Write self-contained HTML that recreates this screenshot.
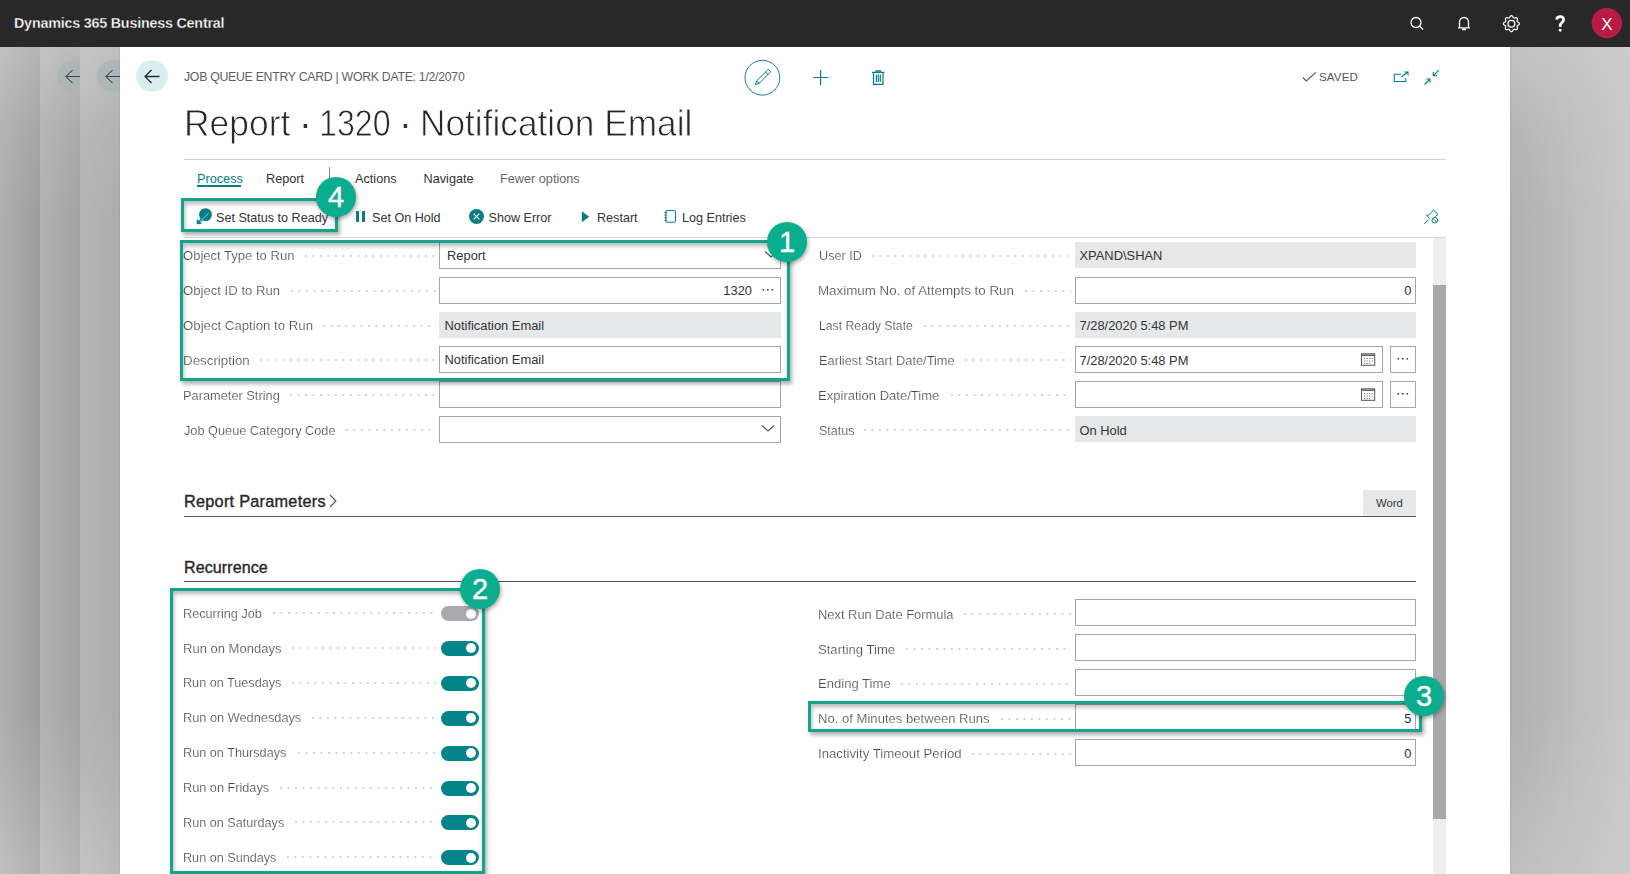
<!DOCTYPE html><html><head><meta charset="utf-8"><style>
*{box-sizing:border-box;margin:0;padding:0}
html,body{width:1630px;height:874px;overflow:hidden;background:#fff;font-family:"Liberation Sans",sans-serif;}
.a{position:absolute}
.t{position:absolute;white-space:nowrap;line-height:1}
#top{left:0;top:0;width:1630px;height:47px;background:#282828}
.pnl{top:47px;height:827px;width:40px}
#card{left:120px;top:47px;width:1390px;height:827px;background:#fff}
.lbl{position:absolute;white-space:nowrap;line-height:1;font-size:12.9px;color:#4a4a4a;-webkit-text-stroke:0.2px #fff}
.dots{position:absolute;height:2px;background-image:radial-gradient(circle at 1px 1px,#d4d4d4 0.75px,transparent 1px);background-size:7.5px 2px;background-repeat:repeat-x}
.fld{position:absolute;border:1px solid #a6a6a6;background:#fff;height:27px}
.ro{position:absolute;background:#e5e7e8;height:26px}
.val{position:absolute;white-space:nowrap;line-height:1;font-size:12.9px;color:#333}
.tab{position:absolute;white-space:nowrap;line-height:1;font-size:12.7px;color:#333;margin-top:1px}
.act{position:absolute;white-space:nowrap;line-height:1;font-size:12.6px;color:#333;margin-top:0.7px}
.hline{position:absolute;height:1px}
.box{position:absolute;border:3px solid #12a58a;box-shadow:2px 3px 4px rgba(0,0,0,.32), inset 1px 3px 4px rgba(0,0,0,.28)}
.badge{position:absolute;width:40px;height:40px;border-radius:50%;background:#0aad8e;box-shadow:1px 2px 4px rgba(0,0,0,.35);color:#fff;font-size:29px;line-height:41px;text-align:center;-webkit-text-stroke:0.4px #fff}
.tg{position:absolute;width:38px;height:15px;border-radius:8px;background:#02848a}
.tg::after{content:"";position:absolute;right:3.5px;top:2.5px;width:10px;height:10px;border-radius:50%;background:#fff}
.tg.off{background:#a9a9b1}
</style></head><body>
<div id="top" class="a"></div>
<div class="t" style="left:14px;top:16px;font-size:14.3px;font-weight:bold;color:#fff;letter-spacing:-0.2px;-webkit-text-stroke:0.3px #282828">Dynamics 365 Business Central</div>
<svg class="a" style="left:1400px;top:8px" width="230" height="32" viewBox="1400 8 230 32">
<g fill="none" stroke="#fff" stroke-width="1.3">
<circle cx="1416" cy="22.5" r="5"/><line x1="1419.6" y1="26.1" x2="1423" y2="29.5"/>
<path d="M1459.5 27.5 V22 a4.5 4.5 0 0 1 9 0 V27.5 M1458 27.8 H1470 M1462 29.5 h4"/>
<circle cx="1511.4" cy="23.7" r="3.4"/>
</g>
<path fill="none" stroke="#fff" stroke-width="1.2" d="M1511.40 15.65 L1511.92 15.79 L1512.39 16.19 L1512.79 16.74 L1513.11 17.30 L1513.42 17.76 L1513.75 18.02 L1514.18 18.07 L1514.71 17.96 L1515.34 17.80 L1516.01 17.69 L1516.62 17.74 L1517.09 18.01 L1517.36 18.48 L1517.41 19.09 L1517.30 19.76 L1517.14 20.39 L1517.03 20.92 L1517.08 21.35 L1517.34 21.68 L1517.80 21.99 L1518.36 22.31 L1518.91 22.71 L1519.31 23.18 L1519.45 23.70 L1519.31 24.22 L1518.91 24.69 L1518.36 25.09 L1517.80 25.41 L1517.34 25.72 L1517.08 26.05 L1517.03 26.48 L1517.14 27.01 L1517.30 27.64 L1517.41 28.31 L1517.36 28.92 L1517.09 29.39 L1516.62 29.66 L1516.01 29.71 L1515.34 29.60 L1514.71 29.44 L1514.18 29.33 L1513.75 29.38 L1513.42 29.64 L1513.11 30.10 L1512.79 30.66 L1512.39 31.21 L1511.92 31.61 L1511.40 31.75 L1510.88 31.61 L1510.41 31.21 L1510.01 30.66 L1509.69 30.10 L1509.38 29.64 L1509.05 29.38 L1508.62 29.33 L1508.09 29.44 L1507.46 29.60 L1506.79 29.71 L1506.18 29.66 L1505.71 29.39 L1505.44 28.92 L1505.39 28.31 L1505.50 27.64 L1505.66 27.01 L1505.77 26.48 L1505.72 26.05 L1505.46 25.72 L1505.00 25.41 L1504.44 25.09 L1503.89 24.69 L1503.49 24.22 L1503.35 23.70 L1503.49 23.18 L1503.89 22.71 L1504.44 22.31 L1505.00 21.99 L1505.46 21.68 L1505.72 21.35 L1505.77 20.92 L1505.66 20.39 L1505.50 19.76 L1505.39 19.09 L1505.44 18.48 L1505.71 18.01 L1506.18 17.74 L1506.79 17.69 L1507.46 17.80 L1508.09 17.96 L1508.62 18.07 L1509.05 18.02 L1509.38 17.76 L1509.69 17.30 L1510.01 16.74 L1510.41 16.19 L1510.88 15.79Z"/>
<path fill="none" stroke="#fff" stroke-width="2.7" d="M1556.6 19.6 C1557 17 1559 16.6 1560.2 16.6 C1562.6 16.6 1563.6 18.2 1563.6 19.8 C1563.6 22.4 1560.2 22.8 1560.2 25.6 V27"/><circle cx="1560.2" cy="30.3" r="1.45" fill="#fff"/>
<circle cx="1606.8" cy="23" r="15.2" fill="#bb1a45"/>
<text x="1606.8" y="29.5" fill="#fff" font-family="Liberation Sans" font-size="17" text-anchor="middle">X</text>
</svg>
<div class="a" style="left:0px;top:47px;width:40px;height:827px;background:linear-gradient(to bottom,rgb(193,193,193) 0%,rgb(180,180,180) 10.0%,rgb(176,176,176) 20.9%,rgb(176,176,176) 80.1%,rgb(179,179,179) 86.7%,rgb(193,193,193) 100%)"><div class="a" style="left:0;top:0;width:40px;height:827px;background:linear-gradient(to bottom,rgb(180,180,180) 0%,rgb(166,166,166) 10.0%,rgb(156,156,156) 20.9%,rgb(156,156,156) 80.1%,rgb(164,164,164) 86.7%,rgb(177,177,177) 100%);-webkit-mask-image:linear-gradient(to right,transparent,#000)"></div></div>
<div class="a" style="left:40px;top:47px;width:40px;height:827px;background:linear-gradient(to bottom,rgb(196,196,196) 0%,rgb(183,183,183) 10.0%,rgb(179,179,179) 20.9%,rgb(179,179,179) 80.1%,rgb(182,182,182) 86.7%,rgb(195,195,195) 100%)"><div class="a" style="left:0;top:0;width:40px;height:827px;background:linear-gradient(to bottom,rgb(186,186,186) 0%,rgb(170,170,170) 10.0%,rgb(162,162,162) 20.9%,rgb(162,162,162) 80.1%,rgb(168,168,168) 86.7%,rgb(180,180,180) 100%);-webkit-mask-image:linear-gradient(to right,transparent,#000)"></div></div>
<div class="a" style="left:80px;top:47px;width:40px;height:827px;background:linear-gradient(to bottom,rgb(199,199,199) 0%,rgb(186,186,186) 10.0%,rgb(181,181,181) 20.9%,rgb(181,181,181) 80.1%,rgb(184,184,184) 86.7%,rgb(197,197,197) 100%)"><div class="a" style="left:0;top:0;width:40px;height:827px;background:linear-gradient(to bottom,rgb(190,190,190) 0%,rgb(178,178,178) 10.0%,rgb(172,172,172) 20.9%,rgb(172,172,172) 80.1%,rgb(176,176,176) 86.7%,rgb(185,185,185) 100%);-webkit-mask-image:linear-gradient(to right,transparent,#000)"></div></div>
<svg class="a" style="left:56.5px;top:60px" width="23.5" height="32" viewBox="56.5 60 23.5 32">
<circle cx="72.5" cy="76" r="16" fill="#a9b6b6" opacity=".75"/>
<path fill="none" stroke="#3c4444" stroke-width="1.05" d="M65.5 76.5 H80.5 M72.0 70 L65.5 76.5 L72.0 83"/>
</svg>
<svg class="a" style="left:96.5px;top:60px" width="23.5" height="32" viewBox="96.5 60 23.5 32">
<circle cx="112.5" cy="76" r="16" fill="#a9b6b6" opacity=".75"/>
<path fill="none" stroke="#3c4444" stroke-width="1.05" d="M105.5 76.5 H120.5 M112.0 70 L105.5 76.5 L112.0 83"/>
</svg>
<div class="a" style="left:1510px;top:47px;width:120px;height:827px;background:linear-gradient(to bottom,rgb(194,194,194) 0%,rgb(182,182,182) 10.0%,rgb(176,176,176) 20.9%,rgb(176,176,176) 80.1%,rgb(180,180,180) 86.7%,rgb(191,191,191) 100%)"><div class="a" style="left:0;top:0;width:120px;height:827px;background:linear-gradient(to bottom,rgb(204,204,204) 0%,rgb(202,202,202) 10.0%,rgb(201,201,201) 20.9%,rgb(201,201,201) 80.1%,rgb(202,202,202) 86.7%,rgb(204,204,204) 100%);-webkit-mask-image:linear-gradient(to right,transparent,#000)"></div></div>
<div class="a" style="left:1510px;top:47px;width:2px;height:827px;background:linear-gradient(to right,rgba(0,0,0,.06),rgba(0,0,0,0))"></div>
<div class="a" style="left:118px;top:47px;width:2px;height:827px;background:linear-gradient(to right,rgba(0,0,0,0),rgba(0,0,0,.06))"></div>
<div id="card" class="a"></div>
<svg class="a" style="left:136px;top:60px" width="32" height="32" viewBox="136 60 32 32">
<circle cx="152" cy="76" r="16" fill="#d9eff2"/>
<path fill="none" stroke="#2a2a2a" stroke-width="1.3" d="M145 76.5 H159.5 M151.5 70 L145 76.5 L151.5 83"/>
</svg>
<div class="t" style="left:184px;top:71px;font-size:12.3px;color:#5a5f66;letter-spacing:-0.28px;">JOB QUEUE ENTRY CARD | WORK DATE: 1/2/2070</div>
<div class="t" style="left:184.3px;top:106px;font-size:36.5px;color:#262626;-webkit-text-stroke:0.8px #fff;transform:scaleX(0.97);transform-origin:0 0">Report</div>
<div class="t" style="left:299.2px;top:106px;font-size:36.5px;color:#262626;-webkit-text-stroke:0.2px #fff;transform:scaleX(1);transform-origin:0 0">·</div>
<div class="t" style="left:318.5px;top:106px;font-size:36.5px;color:#262626;-webkit-text-stroke:0.8px #fff;transform:scaleX(0.881);transform-origin:0 0">1320</div>
<div class="t" style="left:399.2px;top:106px;font-size:36.5px;color:#262626;-webkit-text-stroke:0.2px #fff;transform:scaleX(1);transform-origin:0 0">·</div>
<div class="t" style="left:419.5px;top:106px;font-size:36.5px;color:#262626;-webkit-text-stroke:0.8px #fff;transform:scaleX(0.966);transform-origin:0 0">Notification Email</div>
<svg class="a" style="left:740px;top:56px" width="160" height="44" viewBox="740 56 160 44">
<circle cx="762.4" cy="77.7" r="17.4" fill="none" stroke="#077e86" stroke-width="0.95"/>
<path fill="none" stroke="#077e86" stroke-width="1" stroke-linejoin="round" d="M755.3 84.6 L756.6 80.9 L767.5 70.2 A1.7 1.7 0 0 1 769.9 72.6 L759.0 83.3 Z M756.6 80.9 L759.0 83.3 M765.7 72.0 L768.1 74.4"/>
<path fill="none" stroke="#077e86" stroke-width="1.2" d="M813 77.5 H828.2 M820.6 70 V85"/>
<path fill="none" stroke="#077e86" stroke-width="1.2" d="M872 72.3 H884.5 M876 72.3 V70.8 H880.5 V72.3 M873.5 72.3 V84.3 H883 V72.3 M876.3 74.5 V82 M878.3 74.5 V82 M880.3 74.5 V82"/>
</svg>
<svg class="a" style="left:1300px;top:68px" width="20" height="16" viewBox="1300 68 20 16"><path fill="none" stroke="#555" stroke-width="1.1" d="M1303 77.5 L1306.3 81 L1316 72.3"/></svg>
<div class="t" style="left:1319px;top:70.5px;font-size:11.6px;color:#505862;letter-spacing:0.1px">SAVED</div>
<svg class="a" style="left:1390px;top:66px" width="54" height="22" viewBox="1390 66 54 22">
<path fill="none" stroke="#077e86" stroke-width="1.1" d="M1401 74.3 H1394.3 V81.5 H1405.8 V78 M1401.5 77 L1407.8 72 M1404.5 72 H1408 V75.5"/>
<path fill="none" stroke="#077e86" stroke-width="1.1" d="M1424.5 84.5 L1430 79 M1426.3 79 H1430 V82.8 M1438.8 70.2 L1433.3 75.7 M1433.3 72 V75.7 H1437"/>
</svg>
<div class="hline" style="left:184px;top:159px;width:1262px;background:#d4d4d4"></div>
<div class="tab" style="left:197px;top:172px;color:#077e86">Process</div>
<div class="a" style="left:197px;top:185px;width:44px;height:2px;background:#077e86"></div>
<div class="tab" style="left:266px;top:172px">Report</div>
<div class="a" style="left:329px;top:167px;width:1px;height:26px;background:#8a8a8a"></div>
<div class="tab" style="left:355px;top:172px">Actions</div>
<div class="tab" style="left:423.5px;top:172px">Navigate</div>
<div class="tab" style="left:500px;top:172px;color:#666">Fewer options</div>
<svg class="a" style="left:190px;top:205px" width="30" height="25" viewBox="190 205 30 25">
<circle cx="205.5" cy="214.6" r="6.4" fill="#077e86"/>
<path fill="none" stroke="#077e86" stroke-width="2.6" d="M199.5 221.6 L203.5 217.6"/>
<path fill="none" stroke="#8fe3ea" stroke-width="0.9" d="M208.6 213.2 L200 221.6"/>
<path fill="#077e86" d="M196.6 224.2 L196.9 219 L202 224 Z"/>
</svg>
<div class="act" style="left:216px;top:211px">Set Status to Ready</div>
<div class="a" style="left:356px;top:211px;width:3px;height:11px;background:#077e86"></div><div class="a" style="left:362px;top:211px;width:3px;height:11px;background:#077e86"></div>
<div class="act" style="left:372px;top:211px">Set On Hold</div>
<svg class="a" style="left:468px;top:208px" width="18" height="18" viewBox="468 208 18 18">
<circle cx="476.5" cy="216.5" r="7.5" fill="#077e86"/>
<path stroke="#fff" stroke-width="1.1" d="M473.6 213.6 L479.4 219.4 M479.4 213.6 L473.6 219.4"/>
</svg>
<div class="act" style="left:488.5px;top:211px">Show Error</div>
<svg class="a" style="left:580px;top:210px" width="12" height="14" viewBox="580 210 12 14"><path fill="#077e86" d="M581.8 211.2 L589.2 216.7 L581.8 222.2 Z"/></svg>
<div class="act" style="left:597px;top:211px">Restart</div>
<svg class="a" style="left:662px;top:208px" width="18" height="18" viewBox="662 208 18 18"><rect x="665.8" y="210.6" width="9.7" height="11.6" rx="0.6" fill="none" stroke="#077e86" stroke-width="1"/><path stroke="#077e86" stroke-width="0.9" d="M664.3 212.5 H667.3 M664.3 215.1 H667.3 M664.3 217.7 H667.3 M664.3 220.3 H667.3"/></svg>
<div class="act" style="left:682px;top:211px">Log Entries</div>
<svg class="a" style="left:1420px;top:206px" width="22" height="22" viewBox="1420 206 22 22">
<path fill="none" stroke="#077e86" stroke-width="1" d="M1424.3 223.8 L1428.5 219.6 M1426.5 215.2 L1428.8 215 L1431.5 212.3 L1433.5 210 L1438 214.3 L1435.5 216.6 L1434.8 218 M1426.5 215.2 L1430.2 219 "/>
<circle cx="1434.8" cy="220.2" r="2.8" fill="none" stroke="#077e86" stroke-width="1"/>
<path stroke="#077e86" stroke-width="1" d="M1432.8 218.2 L1436.8 222.2"/>
</svg>
<div class="hline" style="left:184px;top:237px;width:1262px;background:#dadada"></div>
<div class="a" style="left:1433px;top:238px;width:13px;height:636px;background:#efefef"></div>
<div class="a" style="left:1433px;top:285px;width:13px;height:534px;background:#a9a9a9"></div>
<div class="lbl" style="left:182.99px;top:250.1px;transform:scaleX(1.012);transform-origin:0 0">Object Type to Run</div>
<div class="dots" style="left:305.3px;top:254.5px;width:130.7px"></div>
<div class="lbl" style="left:182.98px;top:285.1px;transform:scaleX(1.019);transform-origin:0 0">Object ID to Run</div>
<div class="dots" style="left:290.8px;top:289.5px;width:145.2px"></div>
<div class="lbl" style="left:182.97px;top:320.1px;transform:scaleX(1.025);transform-origin:0 0">Object Caption to Run</div>
<div class="dots" style="left:323.1px;top:324.5px;width:112.9px"></div>
<div class="lbl" style="left:182.97px;top:354.90000000000003px;transform:scaleX(1.035);transform-origin:0 0">Description</div>
<div class="dots" style="left:260.2px;top:359.3px;width:175.8px"></div>
<div class="lbl" style="left:183.01px;top:389.90000000000003px;transform:scaleX(0.993);transform-origin:0 0">Parameter String</div>
<div class="dots" style="left:290.3px;top:394.3px;width:145.7px"></div>
<div class="lbl" style="left:184.00px;top:424.90000000000003px;transform:scaleX(0.988);transform-origin:0 0">Job Queue Category Code</div>
<div class="dots" style="left:346.1px;top:429.3px;width:89.9px"></div>
<div class="fld" style="left:439px;top:242px;width:342px"></div>
<div class="val" style="left:447px;top:250.1px">Report</div>
<svg class="a" style="left:763px;top:249px" width="16" height="10" viewBox="0 0 16 10"><path fill="none" stroke="#555" stroke-width="1.1" d="M2 2.5 L8 8 L14 2.5"/></svg>
<div class="fld" style="left:439px;top:277px;width:342px"></div>
<div class="val" style="right:878px;top:285.1px">1320</div>
<svg class="a" style="left:760px;top:288px" width="16" height="4" viewBox="0 0 16 4"><g fill="#444"><rect x="2.5" y="1" width="1.6" height="1.6"/><rect x="7" y="1" width="1.6" height="1.6"/><rect x="11.5" y="1" width="1.6" height="1.6"/></g></svg>
<div class="ro" style="left:439px;top:312px;width:342px"></div>
<div class="val" style="left:444.5px;top:320.1px">Notification Email</div>
<div class="fld" style="left:439px;top:346px;width:342px"></div>
<div class="val" style="left:444.5px;top:354.1px">Notification Email</div>
<div class="fld" style="left:439px;top:381px;width:342px"></div>
<div class="fld" style="left:439px;top:416px;width:342px"></div>
<svg class="a" style="left:760px;top:423px" width="16" height="10" viewBox="0 0 16 10"><path fill="none" stroke="#555" stroke-width="1.1" d="M2 2.5 L8 8 L14 2.5"/></svg>
<div class="lbl" style="left:818.52px;top:250.1px;transform:scaleX(0.981);transform-origin:0 0">User ID</div>
<div class="dots" style="left:871.7px;top:254.5px;width:199.3px"></div>
<div class="lbl" style="left:818.46px;top:285.1px;transform:scaleX(1.036);transform-origin:0 0">Maximum No. of Attempts to Run</div>
<div class="dots" style="left:1025.2px;top:289.5px;width:45.8px"></div>
<div class="lbl" style="left:818.55px;top:320.1px;transform:scaleX(0.949);transform-origin:0 0">Last Ready State</div>
<div class="dots" style="left:923.5px;top:324.5px;width:147.5px"></div>
<div class="lbl" style="left:818.50px;top:354.90000000000003px;transform:scaleX(0.995);transform-origin:0 0">Earliest Start Date/Time</div>
<div class="dots" style="left:964.8px;top:359.3px;width:106.2px"></div>
<div class="lbl" style="left:818.49px;top:389.90000000000003px;transform:scaleX(1.012);transform-origin:0 0">Expiration Date/Time</div>
<div class="dots" style="left:950.9px;top:394.3px;width:120.1px"></div>
<div class="lbl" style="left:818.53px;top:424.90000000000003px;transform:scaleX(0.969);transform-origin:0 0">Status</div>
<div class="dots" style="left:864.4px;top:429.3px;width:206.6px"></div>
<div class="ro" style="left:1075px;top:242px;width:341px"></div>
<div class="val" style="left:1079.5px;top:250.1px">XPAND\SHAN</div>
<div class="fld" style="left:1075px;top:277px;width:341px"></div>
<div class="val" style="right:218.5px;top:285.1px">0</div>
<div class="ro" style="left:1075px;top:312px;width:341px"></div>
<div class="val" style="left:1079.5px;top:320.1px">7/28/2020 5:48 PM</div>
<div class="fld" style="left:1075px;top:346px;width:308px"></div>
<div class="fld" style="left:1390px;top:346px;width:26px"></div>
<svg class="a" style="left:1360px;top:352px" width="16" height="15" viewBox="0 0 16 15">
<rect x="1.5" y="1.8" width="13.2" height="11.5" fill="none" stroke="#555" stroke-width="1"/>
<path stroke="#555" stroke-width="1.4" d="M1.5 3.2 H14.7"/>
<g fill="#777"><rect x="4" y="6" width="1.2" height="1"/><rect x="6.5" y="6" width="1.2" height="1"/><rect x="9" y="6" width="1.2" height="1"/><rect x="11.5" y="6" width="1.2" height="1"/>
<rect x="4" y="8.5" width="1.2" height="1"/><rect x="6.5" y="8.5" width="1.2" height="1"/><rect x="9" y="8.5" width="1.2" height="1"/><rect x="11.5" y="8.5" width="1.2" height="1"/>
<rect x="4" y="11" width="1.2" height="1"/><rect x="6.5" y="11" width="1.2" height="1"/><rect x="9" y="11" width="1.2" height="1"/></g>
</svg>
<svg class="a" style="left:1395px;top:357px" width="16" height="4" viewBox="0 0 16 4"><g fill="#444"><rect x="2.5" y="1" width="1.6" height="1.6"/><rect x="7" y="1" width="1.6" height="1.6"/><rect x="11.5" y="1" width="1.6" height="1.6"/></g></svg>
<div class="fld" style="left:1075px;top:381px;width:308px"></div>
<div class="fld" style="left:1390px;top:381px;width:26px"></div>
<svg class="a" style="left:1360px;top:387px" width="16" height="15" viewBox="0 0 16 15">
<rect x="1.5" y="1.8" width="13.2" height="11.5" fill="none" stroke="#555" stroke-width="1"/>
<path stroke="#555" stroke-width="1.4" d="M1.5 3.2 H14.7"/>
<g fill="#777"><rect x="4" y="6" width="1.2" height="1"/><rect x="6.5" y="6" width="1.2" height="1"/><rect x="9" y="6" width="1.2" height="1"/><rect x="11.5" y="6" width="1.2" height="1"/>
<rect x="4" y="8.5" width="1.2" height="1"/><rect x="6.5" y="8.5" width="1.2" height="1"/><rect x="9" y="8.5" width="1.2" height="1"/><rect x="11.5" y="8.5" width="1.2" height="1"/>
<rect x="4" y="11" width="1.2" height="1"/><rect x="6.5" y="11" width="1.2" height="1"/><rect x="9" y="11" width="1.2" height="1"/></g>
</svg>
<svg class="a" style="left:1395px;top:392px" width="16" height="4" viewBox="0 0 16 4"><g fill="#444"><rect x="2.5" y="1" width="1.6" height="1.6"/><rect x="7" y="1" width="1.6" height="1.6"/><rect x="11.5" y="1" width="1.6" height="1.6"/></g></svg>
<div class="val" style="left:1079.5px;top:354.90000000000003px">7/28/2020 5:48 PM</div>
<div class="ro" style="left:1075px;top:416px;width:341px"></div>
<div class="val" style="left:1079.5px;top:424.90000000000003px">On Hold</div>
<div class="t" style="left:184px;top:493px;font-size:16.3px;color:#262626;-webkit-text-stroke:0.35px #262626;letter-spacing:0.25px">Report Parameters</div>
<svg class="a" style="left:327px;top:493px" width="12" height="16" viewBox="0 0 12 16"><path fill="none" stroke="#555" stroke-width="1.1" d="M3 2 L9 8 L3 14"/></svg>
<div class="a" style="left:1363px;top:490px;width:53px;height:26px;background:#e6e8ea"></div>
<div class="t" style="left:1376px;top:497.5px;font-size:11.3px;color:#333">Word</div>
<div class="hline" style="left:184px;top:516px;width:1232px;background:#4e5460"></div>
<div class="t" style="left:184px;top:559px;font-size:16.1px;color:#262626;-webkit-text-stroke:0.35px #262626;letter-spacing:0.07px">Recurrence</div>
<div class="hline" style="left:184px;top:581px;width:1232px;background:#4e5460"></div>
<div class="lbl" style="left:183.32px;top:607.6px;transform:scaleX(0.982);transform-origin:0 0">Recurring Job</div>
<div class="dots" style="left:272.9px;top:612.0px;width:163.1px"></div>
<div class="tg off" style="left:441px;top:606.0px"></div>
<div class="lbl" style="left:183.29px;top:642.5px;transform:scaleX(1.01);transform-origin:0 0">Run on Mondays</div>
<div class="dots" style="left:292.3px;top:646.9px;width:143.7px"></div>
<div class="tg" style="left:441px;top:640.9px"></div>
<div class="lbl" style="left:183.32px;top:677.4px;transform:scaleX(0.98);transform-origin:0 0">Run on Tuesdays</div>
<div class="dots" style="left:292.3px;top:681.8px;width:143.7px"></div>
<div class="tg" style="left:441px;top:675.8px"></div>
<div class="lbl" style="left:183.31px;top:712.3000000000001px;transform:scaleX(0.99);transform-origin:0 0">Run on Wednesdays</div>
<div class="dots" style="left:312.1px;top:716.7px;width:123.9px"></div>
<div class="tg" style="left:441px;top:710.7px"></div>
<div class="lbl" style="left:183.32px;top:747.2px;transform:scaleX(0.984);transform-origin:0 0">Run on Thursdays</div>
<div class="dots" style="left:297.6px;top:751.6px;width:138.4px"></div>
<div class="tg" style="left:441px;top:745.6px"></div>
<div class="lbl" style="left:183.31px;top:782.1px;transform:scaleX(0.985);transform-origin:0 0">Run on Fridays</div>
<div class="dots" style="left:280.0px;top:786.5px;width:156.0px"></div>
<div class="tg" style="left:441px;top:780.5px"></div>
<div class="lbl" style="left:183.32px;top:817.0px;transform:scaleX(0.981);transform-origin:0 0">Run on Saturdays</div>
<div class="dots" style="left:295.4px;top:821.4px;width:140.6px"></div>
<div class="tg" style="left:441px;top:815.4px"></div>
<div class="lbl" style="left:183.32px;top:851.9px;transform:scaleX(0.98);transform-origin:0 0">Run on Sundays</div>
<div class="dots" style="left:287.4px;top:856.3px;width:148.6px"></div>
<div class="tg" style="left:441px;top:850.3px"></div>
<div class="lbl" style="left:818.20px;top:608.6px;transform:scaleX(1.001);transform-origin:0 0">Next Run Date Formula</div>
<div class="dots" style="left:964.4px;top:613.0px;width:106.6px"></div>
<div class="fld" style="left:1075px;top:599.0px;width:341px"></div>
<div class="lbl" style="left:818.19px;top:643.5px;transform:scaleX(1.015);transform-origin:0 0">Starting Time</div>
<div class="dots" style="left:906.3px;top:647.9px;width:164.7px"></div>
<div class="fld" style="left:1075px;top:633.9px;width:341px"></div>
<div class="lbl" style="left:818.19px;top:678.4px;transform:scaleX(1.014);transform-origin:0 0">Ending Time</div>
<div class="dots" style="left:901.2px;top:682.8px;width:169.8px"></div>
<div class="fld" style="left:1075px;top:668.8px;width:341px"></div>
<div class="lbl" style="left:818.19px;top:713.3000000000001px;transform:scaleX(1.015);transform-origin:0 0">No. of Minutes between Runs</div>
<div class="dots" style="left:1000.7px;top:717.7px;width:70.3px"></div>
<div class="fld" style="left:1075px;top:703.7px;width:341px"></div>
<div class="lbl" style="left:818.18px;top:748.2px;transform:scaleX(1.023);transform-origin:0 0">Inactivity Timeout Period</div>
<div class="dots" style="left:972.4px;top:752.6px;width:98.6px"></div>
<div class="fld" style="left:1075px;top:738.6px;width:341px"></div>
<div class="val" style="right:218.5px;top:713.3000000000001px">5</div>
<div class="val" style="right:218.5px;top:748.2px">0</div>
<div class="box" style="left:180px;top:240px;width:610px;height:141px"></div>
<div class="box" style="left:181px;top:198px;width:157px;height:34px"></div>
<div class="box" style="left:170px;top:588px;width:315px;height:286px"></div>
<div class="box" style="left:808px;top:701px;width:614px;height:31px"></div>
<div class="badge" style="left:767px;top:222px">1</div>
<div class="badge" style="left:460px;top:569px">2</div>
<div class="badge" style="left:1404px;top:676px">3</div>
<div class="badge" style="left:316px;top:177px">4</div>
</body></html>
